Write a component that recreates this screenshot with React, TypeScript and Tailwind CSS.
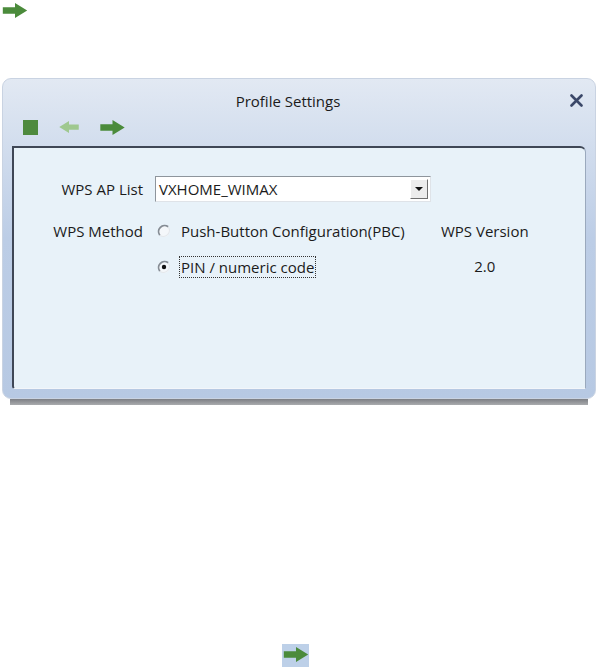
import React from 'react';

const font = { fontFamily: '"Open Sans", "Liberation Sans", Arial, sans-serif' };

const Arrow = ({ className = '', color = '#4b8b3b' }: { className?: string; color?: string }) => (
  <svg viewBox="0 0 26 16" className={className}>
    <path d="M0 4.5 H13 V0 L26 8 L13 16 V11.5 H0 Z" fill={color} />
  </svg>
);

const Radio = ({ checked }: { checked?: boolean }) => (
  <svg viewBox="0 0 14 14" className="w-[14px] h-[14px] shrink-0">
    <circle cx="7" cy="7" r="6" fill="#f4f7fa" />
    <path d="M11.2 2.8 A6 6 0 0 0 2.8 11.2" fill="none" stroke="#858c94" strokeWidth="1.8" />
    <path d="M2.8 11.2 A6 6 0 0 0 11.2 2.8" fill="none" stroke="#e4e8ec" strokeWidth="1.3" />
    {checked && <circle cx="7" cy="7" r="2.2" fill="#111" />}
  </svg>
);

export default function App() {
  return (
    <div className="w-[601px] h-[668px] bg-white flex flex-col text-[#1b1b1b]" style={font}>
      {/* top arrow */}
      <div className="pl-[2px] pt-[3px] h-[20px]">
        <Arrow className="w-[26px] h-[15px]" />
      </div>

      {/* window */}
      <div className="ml-[2px] mt-[58px] w-[594px] relative">
        <div className="h-[321px] rounded-[9px] border border-[#c9d3e2] bg-gradient-to-b from-[#e2e9f3] via-[#bccde6] to-[#b7c9e3] flex flex-col px-[9px] pb-[9px]">
          <div className="relative h-[33px] pt-[13px] pr-[22px] text-center text-[15px] leading-[18px]">
            Profile Settings
            <svg viewBox="0 0 14 13" className="absolute right-[2px] top-[15px] w-[15px] h-[13px]">
              <path d="M2 1.5 L12 11.5 M12 1.5 L2 11.5" stroke="#3b4869" strokeWidth="2.6" strokeLinecap="round" />
            </svg>
          </div>
          <div className="h-[34px] flex items-center gap-[18px] pl-[11px] pb-[4px]">
            <div className="w-[15px] h-[15px] bg-[#4e8a3e]" />
            <svg viewBox="0 0 26 16" className="w-[26px] h-[12px]">
              <path d="M26 4.5 H13 V0 L0 8 L13 16 V11.5 H26 Z" fill="#9fc88f" />
            </svg>
            <Arrow className="w-[25px] h-[15px]" />
          </div>
          <div className="flex-1 bg-[#e8f2f9] border-t-2 border-l-2 border-[#3f4756] border-r border-r-[#9aa9bd] border-b border-b-[#f3f6fa] rounded-tr-[6px] rounded-bl-[3px]">
            <div className="grid grid-cols-[129px_1fr] gap-x-[12px] text-[15px] leading-[18px] pt-[28px]">
              <div className="text-right h-[26px] flex items-center justify-end">WPS AP List</div>
              <div className="w-[276px] h-[26px] bg-white border border-t-[#8e959c] border-l-[#8e959c] border-r-[#dfe3e8] border-b-[#dfe3e8] flex items-center">
                <span className="flex-1 pl-[3px]">VXHOME_WIMAX</span>
                <div className="w-[18px] h-[20px] mr-[2px] bg-[#ececec] border border-t-white border-l-white border-r-[#6f6f6f] border-b-[#6f6f6f] flex items-center justify-center">
                  <svg viewBox="0 0 8 4" className="w-[8px] h-[4px]">
                    <path d="M0 0 H8 L4 4 Z" fill="#111" />
                  </svg>
                </div>
              </div>

              <div className="text-right mt-[20px]">WPS Method</div>
              <div className="mt-[20px] flex">
                <div className="flex flex-col gap-[16px]">
                  <div className="flex items-center gap-[10px] pl-[2px]">
                    <Radio />
                    <span>Push-Button Configuration(PBC)</span>
                  </div>
                  <div className="flex items-center gap-[8px] pl-[2px]">
                    <Radio checked />
                    <span className="border border-dotted border-[#333] px-[1px] leading-[20px]">PIN / numeric code</span>
                  </div>
                </div>
                <div className="ml-[34px] flex flex-col items-center gap-[16px] w-[92px]">
                  <span>WPS Version</span>
                  <span className="leading-[20px]">2.0</span>
                </div>
              </div>
            </div>
          </div>
        </div>
        <div className="mx-[8px] h-[6px] bg-gradient-to-b from-[#7d7f84] to-[#a9abae]" />
      </div>

      {/* bottom arrow */}
      <div className="mt-[239px] ml-[282px] w-[27px] h-[23px] bg-[#bdd0e8] flex items-start justify-center pt-[3px]">
        <Arrow className="w-[26px] h-[15px]" />
      </div>
    </div>
  );
}
